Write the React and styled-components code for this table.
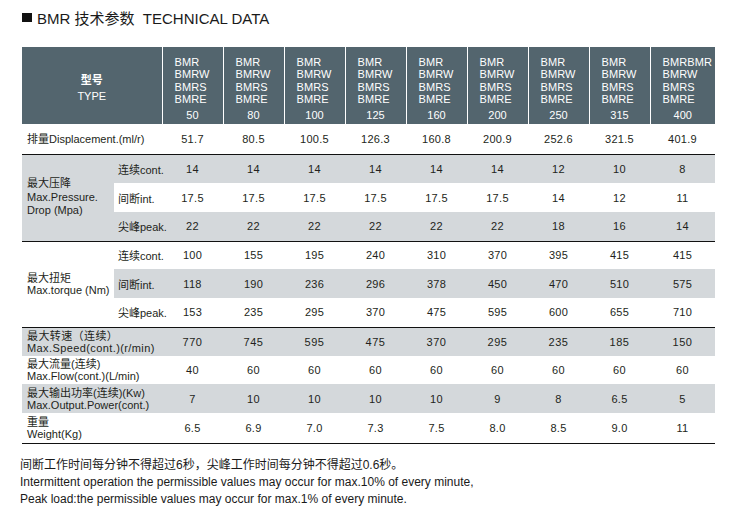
import React from "react";
import styled, { createGlobalStyle } from "styled-components";

const Global = createGlobalStyle`
  html, body { margin: 0; padding: 0; background: #fff; }
  body { font-family: "Liberation Sans", "Noto Sans CJK SC", sans-serif; color: #231f20; }
`;

const Page = styled.div`
  width: 737px;
  height: 516px;
  box-sizing: border-box;
  padding: 6px 0 0 22px;
  display: flex;
  flex-direction: column;
`;

const Title = styled.h1`
  margin: 0;
  height: 22px;
  display: flex;
  align-items: center;
  gap: 5px;
  font-size: 15px;
  font-weight: normal;
  color: #1a1a1a;
  white-space: pre;
`;

const Square = styled.span`
  width: 10px;
  height: 9px;
  background: #111;
  display: inline-block;
`;

const Table = styled.table`
  margin-top: 19px;
  border-collapse: collapse;
  table-layout: fixed;
  width: 693px;
  font-size: 11px;
`;

const HeadRow = styled.tr`
  height: 77px;
  background: #53656e;
  color: #fff;
`;

const TypeCell = styled.th`
  padding: 2px 0 0;
  text-align: center;
  vertical-align: middle;
  font-size: 11px;
  line-height: 16px;
  font-weight: normal;
`;

const TypeCn = styled.div`
  font-weight: bold;
  padding-top: 2px;
`;

const ModelCell = styled.th`
  padding: 9px 0 0 12px;
  border-left: 1px solid #fff;
  vertical-align: top;
  text-align: left;
  font-weight: normal;
  font-size: 11px;
  line-height: 12.3px;
  letter-spacing: 0.1px;
`;

const Size = styled.div`
  margin-top: 3px;
  margin-left: -12px;
  text-align: center;
  line-height: 14px;
`;

const Row = styled.tr`
  height: ${(p) => p.$h}px;
  background: ${(p) => (p.$gray ? "#d4d8db" : "#fff")};
  border-bottom: ${(p) => (p.$line ? "1px solid #111" : "none")};
`;

const Label = styled.td`
  padding: 0 0 0 5px;
  text-align: left;
  vertical-align: middle;
  line-height: ${(p) => p.$lh || 12}px;
  white-space: nowrap;
  letter-spacing: ${(p) => p.$ls || 0}px;
  background: ${(p) => (p.$gray ? "#d4d8db" : p.$white ? "#fff" : "transparent")};
`;

const SubLabel = styled.td`
  padding: 0 0 0 4px;
  white-space: nowrap;
  vertical-align: middle;
`;

const Val = styled.td`
  padding: 0;
  text-align: center;
  vertical-align: middle;
  letter-spacing: ${(p) => p.$ls || 0.3}px;
`;

const Notes = styled.div`
  margin-top: 13px;
  margin-left: -2px;
  color: #1a1a1a;
  font-size: 12px;
  line-height: 17px;
`;

const models = ["50", "80", "100", "125", "160", "200", "250", "315", "400"];
const cols = [92, 48, 61, 61, 61, 61, 61, 61, 61, 61, 65];

const Vals = ({ data, ls }) =>
  data.map((v, i) => (
    <Val key={i} $ls={ls}>
      {v}
    </Val>
  ));

export default function App() {
  return (
    <>
      <Global />
      <Page>
        <Title>
          <Square />
          {"BMR 技术参数  TECHNICAL DATA"}
        </Title>
        <Table>
          <colgroup>
            {cols.map((w, i) => (
              <col key={i} style={{ width: w }} />
            ))}
          </colgroup>
          <tbody>
            <HeadRow>
              <TypeCell colSpan={2}>
                <TypeCn>型号</TypeCn>
                <div>TYPE</div>
              </TypeCell>
              {models.map((m, i) => (
                <ModelCell key={m}>
                  {i === 8 ? "BMRBMR" : "BMR"}
                  <br />
                  BMRW
                  <br />
                  BMRS
                  <br />
                  BMRE
                  <Size>{m}</Size>
                </ModelCell>
              ))}
            </HeadRow>

            <Row $h={30} $line>
              <Label colSpan={2}>排量Displacement.(ml/r)</Label>
              <Vals data={["51.7", "80.5", "100.5", "126.3", "160.8", "200.9", "252.6", "321.5", "401.9"]} />
            </Row>

            <Row $h={29} $gray>
              <Label rowSpan={3} $gray $lh={13.5}>
                最大压降
                <br />
                Max.Pressure.
                <br />
                Drop (Mpa)
              </Label>
              <SubLabel>连续cont.</SubLabel>
              <Vals data={["14", "14", "14", "14", "14", "14", "12", "10", "8"]} />
            </Row>
            <Row $h={29}>
              <SubLabel>间断int.</SubLabel>
              <Vals data={["17.5", "17.5", "17.5", "17.5", "17.5", "17.5", "14", "12", "11"]} />
            </Row>
            <Row $h={29} $gray $line>
              <SubLabel>尖峰peak.</SubLabel>
              <Vals data={["22", "22", "22", "22", "22", "22", "18", "16", "14"]} />
            </Row>

            <Row $h={28}>
              <Label rowSpan={3} $lh={12.5} $white>
                最大扭矩
                <br />
                Max.torque (Nm)
              </Label>
              <SubLabel>连续cont.</SubLabel>
              <Vals data={["100", "155", "195", "240", "310", "370", "395", "415", "415"]} />
            </Row>
            <Row $h={29} $gray>
              <SubLabel>间断int.</SubLabel>
              <Vals data={["118", "190", "236", "296", "378", "450", "470", "510", "575"]} />
            </Row>
            <Row $h={29} $line>
              <SubLabel>尖峰peak.</SubLabel>
              <Vals data={["153", "235", "295", "370", "475", "595", "600", "655", "710"]} />
            </Row>

            <Row $h={29} $gray>
              <Label colSpan={2} $ls={0.4}>
                最大转速（连续）
                <br />
                Max.Speed(cont.)(r/min)
              </Label>
              <Vals ls={0.6} data={["770", "745", "595", "475", "370", "295", "235", "185", "150"]} />
            </Row>
            <Row $h={28}>
              <Label colSpan={2}>
                最大流量(连续)
                <br />
                Max.Flow(cont.)(L/min)
              </Label>
              <Vals data={["40", "60", "60", "60", "60", "60", "60", "60", "60"]} />
            </Row>
            <Row $h={29} $gray>
              <Label colSpan={2}>
                最大输出功率(连续)(Kw)
                <br />
                Max.Output.Power(cont.)
              </Label>
              <Vals data={["7", "10", "10", "10", "10", "9", "8", "6.5", "5"]} />
            </Row>
            <Row $h={30} $line>
              <Label colSpan={2}>
                重量
                <br />
                Weight(Kg)
              </Label>
              <Vals data={["6.5", "6.9", "7.0", "7.3", "7.5", "8.0", "8.5", "9.0", "11"]} />
            </Row>
          </tbody>
        </Table>
        <Notes>
          <div>间断工作时间每分钟不得超过6秒，尖峰工作时间每分钟不得超过0.6秒。</div>
          <div>Intermittent operation the permissible values may occur for max.10% of every minute,</div>
          <div>Peak load:the permissible values may occur for max.1% of every minute.</div>
        </Notes>
      </Page>
    </>
  );
}
